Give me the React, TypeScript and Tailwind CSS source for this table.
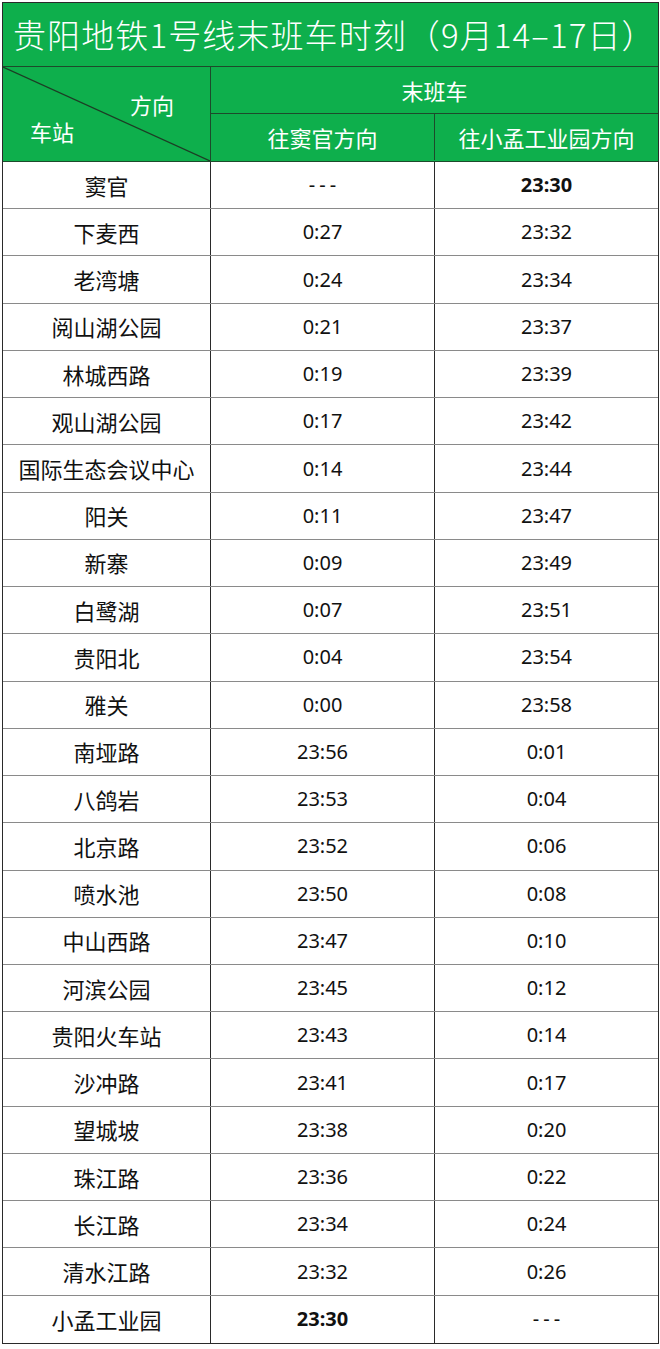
const cjk = { fontFamily: '"Noto Sans CJK SC", "Noto Sans", sans-serif' };
const num = { fontFamily: '"Noto Sans", "Noto Sans CJK SC", sans-serif' };

type Row = { name: string; a: string; b: string; boldA?: boolean; boldB?: boolean };

const rows: Row[] = [
  { name: "窦官", a: "---", b: "23:30", boldB: true },
  { name: "下麦西", a: "0:27", b: "23:32" },
  { name: "老湾塘", a: "0:24", b: "23:34" },
  { name: "阅山湖公园", a: "0:21", b: "23:37" },
  { name: "林城西路", a: "0:19", b: "23:39" },
  { name: "观山湖公园", a: "0:17", b: "23:42" },
  { name: "国际生态会议中心", a: "0:14", b: "23:44" },
  { name: "阳关", a: "0:11", b: "23:47" },
  { name: "新寨", a: "0:09", b: "23:49" },
  { name: "白鹭湖", a: "0:07", b: "23:51" },
  { name: "贵阳北", a: "0:04", b: "23:54" },
  { name: "雅关", a: "0:00", b: "23:58" },
  { name: "南垭路", a: "23:56", b: "0:01" },
  { name: "八鸽岩", a: "23:53", b: "0:04" },
  { name: "北京路", a: "23:52", b: "0:06" },
  { name: "喷水池", a: "23:50", b: "0:08" },
  { name: "中山西路", a: "23:47", b: "0:10" },
  { name: "河滨公园", a: "23:45", b: "0:12" },
  { name: "贵阳火车站", a: "23:43", b: "0:14" },
  { name: "沙冲路", a: "23:41", b: "0:17" },
  { name: "望城坡", a: "23:38", b: "0:20" },
  { name: "珠江路", a: "23:36", b: "0:22" },
  { name: "长江路", a: "23:34", b: "0:24" },
  { name: "清水江路", a: "23:32", b: "0:26" },
  { name: "小孟工业园", a: "23:30", b: "---", boldA: true },
];

function TimeCell({ value, bold, last }: { value: string; bold?: boolean; last?: boolean }) {
  const dash = value === "---";
  return (
    <div
      className={`flex items-center justify-center text-[20px] text-[#111] ${bold ? "font-bold" : ""} ${
        dash ? "tracking-[4px] pl-[4px]" : ""
      } ${last ? "w-[223px]" : "w-[224px] border-r border-[#2a2a2a]"}`}
      style={num}
    >
      {value}
    </div>
  );
}

export default function App() {
  return (
    <div className="w-[660px] h-[1349px] bg-white">
      <div className="ml-[2px] mt-[2px] w-[657px] border border-[#2a2a2a]">
        {/* title */}
        <div
          className="h-[64px] bg-[#0eaf4c] border-b border-[#1d4a2b] flex items-center pl-[10px] text-[33px] text-white leading-none font-light tracking-[1.1px]"
          style={cjk}
        >
          贵阳地铁1号线末班车时刻（9月14–17日）
        </div>

        {/* header */}
        <div className="flex bg-[#0eaf4c] text-white border-b border-[#1d4a2b]" style={cjk}>
          <div className="relative w-[208px] h-[94px] border-r border-[#1d4a2b] text-[22px] leading-none">
            <svg className="absolute inset-0" width="207" height="94" viewBox="0 0 207 94">
              <line x1="0" y1="0" x2="207" y2="94" stroke="#1d3d25" strokeWidth="1.2" />
            </svg>
            <span className="absolute left-[127px] top-[26px]">方向</span>
            <span className="absolute left-[27px] top-[53px]">车站</span>
          </div>
          <div className="flex-1 flex flex-col text-[22px]">
            <div className="h-[47px] border-b border-[#1d4a2b] flex items-center justify-center">末班车</div>
            <div className="h-[46px] flex">
              <div className="w-[224px] border-r border-[#1d4a2b] flex items-center justify-center">往窦官方向</div>
              <div className="w-[223px] flex items-center justify-center">往小孟工业园方向</div>
            </div>
          </div>
        </div>

        {/* rows */}
        {rows.map((r, i) => (
          <div
            key={r.name}
            className={`flex h-[47.24px] ${i < rows.length - 1 ? "border-b border-[#8a8a8a]" : ""}`}
          >
            <div
              className="w-[208px] border-r border-[#2a2a2a] flex items-center justify-center text-[22px] text-[#111]"
              style={cjk}
            >
              {r.name}
            </div>
            <TimeCell value={r.a} bold={r.boldA} />
            <TimeCell value={r.b} bold={r.boldB} last />
          </div>
        ))}
      </div>
    </div>
  );
}
